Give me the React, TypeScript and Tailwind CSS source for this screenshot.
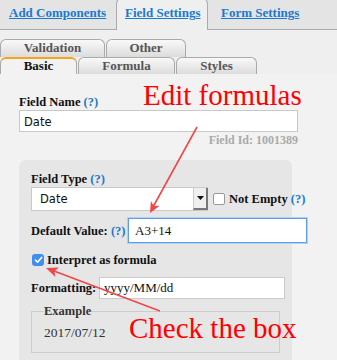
import React from "react";

const S = "font-['Liberation_Serif',serif]";

function SubTab({ w, children, active = false, ml = "" }: { w: string; children: React.ReactNode; active?: boolean; ml?: string }) {
  return (
    <div
      className={`${w} ${ml} h-full shrink-0 rounded-t-[6px] border border-b-0 text-center text-[13px] font-bold ${
        active
          ? "border-[#aaa] border-t-2 border-t-[#f5a41c] bg-[#f2f2f2] leading-[14px] text-[#111]"
          : "border-[#aaa] bg-gradient-to-b from-[#f9f9f9] to-[#dcdcdc] leading-[16px] text-[#555]"
      }`}
    >
      {children}
    </div>
  );
}

function Help() {
  return <span className="text-[#1b78cc]">(?)</span>;
}

export default function App() {
  return (
    <div className={`relative h-[360px] w-[337px] overflow-hidden bg-[#f2f2f2] ${S}`}>
      {/* top tabs */}
      <div className="flex h-[30px] items-end border-b border-[#aaa] bg-[#e4e4e4]">
        <div className="h-full w-[116px] shrink-0 whitespace-nowrap pl-[9px] pt-[5px] text-[13px] font-bold leading-[16px] text-[#1a7ad0] underline">
          Add Components
        </div>
        <div className="-mb-px h-[33px] w-[92px] shrink-0 whitespace-nowrap rounded-t-[7px] border border-b-0 border-[#aaa] bg-[#efefef] pl-[8px] pt-[7px] text-[13px] font-bold leading-[16px] text-[#1a7ad0] underline">
          Field Settings
        </div>
        <div className="h-full whitespace-nowrap pl-[13px] pt-[5px] text-[13px] font-bold leading-[16px] text-[#1a7ad0] underline">
          Form Settings
        </div>
      </div>

      {/* sub tabs */}
      <div className="bg-[#efefef] pt-[9px]">
        <div className="flex h-[18px]">
          <SubTab w="w-[105px]">Validation</SubTab>
          <SubTab w="w-[80px]" ml="ml-[1px]">Other</SubTab>
        </div>
        <div className="flex h-[17px]">
          <SubTab w="w-[77px]" active>
            Basic
          </SubTab>
          <SubTab w="w-[97px]" ml="ml-[1px]">Formula</SubTab>
          <SubTab w="w-[81px]" ml="ml-[1px]">Styles</SubTab>
        </div>
      </div>

      {/* content */}
      <div className="px-[19px] pt-[20px] text-[#111]">
        <div className="whitespace-nowrap text-[12.5px] font-bold leading-[16px]">
          Field Name <Help />
        </div>
        <div className="w-[279px]">
          <div className="h-[22px] border border-[#c8c8c8] bg-white pl-[4px] font-['DejaVu_Sans',sans-serif] text-[11.5px] leading-[22px] text-[#111]">
            Date
          </div>
          <div className="mt-[1px] text-right text-[12px] font-bold leading-[14px] text-[#aaa]">Field Id: 1001389</div>
        </div>

        <div className="mt-[13px] w-[273px] rounded-[7px] bg-[#e6e6e6] pb-[20px] pl-[12px] pt-[11px]">
          <div className="whitespace-nowrap text-[12.5px] font-bold leading-[16px]">
            Field Type <Help />
          </div>
          <div className="flex h-[24px] items-center">
            <div className="flex h-[24px] w-[177px] shrink-0 border-y border-l border-[#c9c9c9] bg-white">
              <div className="flex-1 pl-[8px] font-['DejaVu_Sans',sans-serif] text-[11.5px] leading-[22px]">Date</div>
              <div className="flex w-[15px] items-center justify-center border-b-2 border-l border-r-2 border-b-[#777] border-l-[#ccc] border-r-[#777] bg-[#efefef]">
                <svg width="7" height="4" viewBox="0 0 7 4">
                  <polygon points="0,0 7,0 3.5,4" fill="#111" />
                </svg>
              </div>
            </div>
            <div className="ml-[5px] h-[12px] w-[12px] shrink-0 rounded-[2px] border border-[#999] bg-white" />
            <div className="ml-[4px] shrink-0 whitespace-nowrap text-[12.5px] font-bold leading-[16px]">
              Not Empty <Help />
            </div>
          </div>

          <div className="mt-[7px] flex h-[25px] items-center">
            <div className="w-[97px] shrink-0 whitespace-nowrap text-[12.5px] font-bold leading-[16px]">
              Default Value: <Help />
            </div>
            <div className="h-[25px] w-[179px] shrink-0 border border-[#5e9ee6] bg-white pl-[6px] text-[13px] leading-[23px] text-[#111] shadow-[0_0_0_1px_#b0d0f4]">
              A3+14
            </div>
          </div>

          <div className="mt-[9px] flex h-[16px] items-center">
            <div className="ml-[1px] flex h-[12px] w-[12px] shrink-0 items-center justify-center rounded-[3px] bg-[#3d8ef0]">
              <svg width="9" height="8" viewBox="0 0 9 8">
                <path d="M1.5 4.2 L3.6 6.2 L7.6 1.5" fill="none" stroke="#fff" strokeWidth="1.7" strokeLinecap="round" strokeLinejoin="round" />
              </svg>
            </div>
            <div className="ml-[3px] whitespace-nowrap text-[12.5px] font-bold leading-[16px]">Interpret as formula</div>
          </div>

          <div className="mt-[9px] flex h-[22px] items-center">
            <div className="w-[68px] shrink-0 whitespace-nowrap text-[12.5px] font-bold leading-[16px]">Formatting:</div>
            <div className="h-[22px] w-[186px] shrink-0 border border-[#ccc] bg-white pl-[4px] text-[13px] leading-[20px]">yyyy/MM/dd</div>
          </div>

          <fieldset className="mt-[5px] w-[249px] border border-[#ccc] pb-[11px] pl-[12px]">
            <legend className="text-[12.5px] font-bold leading-[14px] text-[#333]">Example</legend>
            <div className="mt-[7px] text-[13.5px] leading-[16px] text-[#333]">2017/07/12</div>
          </fieldset>
        </div>
      </div>

      {/* annotations */}
      <svg className="pointer-events-none absolute left-0 top-0" width="337" height="360" viewBox="0 0 337 360">
        <line x1="197" y1="127" x2="153" y2="207" stroke="#f04848" strokeWidth="1.6" />
        <polygon points="150,213 159.7,205.7 153.8,206 150.9,200.9" fill="#f04848" />
        <line x1="160" y1="311" x2="54" y2="271" stroke="#f04848" strokeWidth="1.6" />
        <polygon points="46,268 59,267.5 54.4,271.2 55.4,276.9" fill="#f04848" />
      </svg>
      <div className="pointer-events-none absolute left-[143px] top-[81px] whitespace-nowrap text-[29px] leading-[29px] text-[#ff0000]">Edit formulas</div>
      <div className="pointer-events-none absolute left-[129px] top-[314px] whitespace-nowrap text-[29px] leading-[29px] text-[#ff0000]">Check the box</div>
    </div>
  );
}
